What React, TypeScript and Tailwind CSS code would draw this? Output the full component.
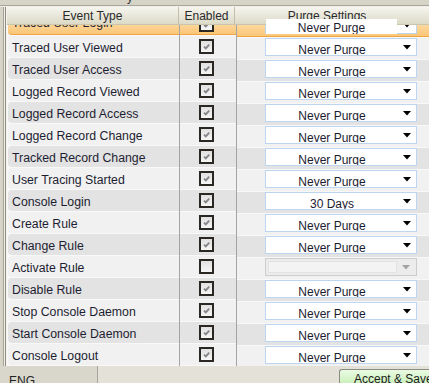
import React from "react";

type Row = {
  label: string;
  checked: boolean;
  value: string;
  disabled?: boolean;
  selected?: boolean;
};

const rows: Row[] = [
  { label: "Traced User Login", checked: true, value: "Never Purge", selected: true },
  { label: "Traced User Viewed", checked: true, value: "Never Purge" },
  { label: "Traced User Access", checked: true, value: "Never Purge" },
  { label: "Logged Record Viewed", checked: true, value: "Never Purge" },
  { label: "Logged Record Access", checked: true, value: "Never Purge" },
  { label: "Logged Record Change", checked: true, value: "Never Purge" },
  { label: "Tracked Record Change", checked: true, value: "Never Purge" },
  { label: "User Tracing Started", checked: true, value: "Never Purge" },
  { label: "Console Login", checked: true, value: "30 Days" },
  { label: "Create Rule", checked: true, value: "Never Purge" },
  { label: "Change Rule", checked: true, value: "Never Purge" },
  { label: "Activate Rule", checked: false, value: "", disabled: true },
  { label: "Disable Rule", checked: true, value: "Never Purge" },
  { label: "Stop Console Daemon", checked: true, value: "Never Purge" },
  { label: "Start Console Daemon", checked: true, value: "Never Purge" },
  { label: "Console Logout", checked: true, value: "Never Purge" },
];

const Arrow = ({ color }: { color: string }) => (
  <svg width="8" height="5" viewBox="0 0 8 5">
    <path d="M0 0 L8 0 L4 4.5 Z" fill={color} />
  </svg>
);

const CheckBox = ({ checked }: { checked: boolean }) => (
  <div className="w-[15px] h-[15px] border-2 border-[#2b2824] bg-linear-to-b from-[#e0e0e0] to-[#f6f6f6] flex items-center justify-center">
    {checked && (
      <svg width="11" height="11" viewBox="0 0 11 11">
        <path d="M3 5.6 L4.8 7.4 L8.2 3.6" stroke="#858585" strokeWidth="1.8" fill="none" />
      </svg>
    )}
  </div>
);

const Dropdown = ({ value, disabled }: { value: string; disabled?: boolean }) => {
  if (disabled) {
    return (
      <div className="ml-[28px] mt-[2px] w-[152px] h-[18px] border border-[#cdcdcd] bg-[#ececec] flex p-[2px]">
        <div className="flex-1 bg-[#f3f3f3] border border-[#e2e2e2]" />
        <div className="w-[17px] flex items-center justify-center">
          <Arrow color="#a3a3a3" />
        </div>
      </div>
    );
  }
  return (
    <div className="ml-[28px] mt-[2px] w-[152px] h-[18px] border border-[#bcd6f2] bg-white flex overflow-hidden">
      <div className="flex-1 text-center text-[12px] leading-none pt-[5px] text-[#1c1c30]">{value}</div>
      <div className="w-[18px] flex items-center justify-center">
        <Arrow color="#000000" />
      </div>
    </div>
  );
};

export default function App() {
  return (
    <div className="relative w-[429px] h-[383px] overflow-hidden bg-[#d6d3c7] font-['Liberation_Sans',Arial,sans-serif] text-[#1e1e32]">
      {/* top strip */}
      <div className="h-[7px] flex flex-col">
        <div className="h-[5px] overflow-hidden">
          <div className="pl-[127px] -mt-[9px] text-[12px] leading-none text-[#333]">y</div>
        </div>
        <div className="h-px bg-[#a9a69a]" />
        <div className="h-px bg-[#efeee8]" />
      </div>

      <div className="flex h-[359px]">
        {/* left gutter */}
        <div className="flex w-[7px]">
          <div className="w-[3px]" />
          <div className="w-px bg-[#a6a397]" />
          <div className="w-px bg-[#efeee8]" />
          <div className="w-px bg-[#8f8c82]" />
          <div className="w-px bg-[#f4f3ee]" />
        </div>

        <div className="flex-1 flex flex-col bg-[#f8f8f8]">
          {/* header */}
          <div className="h-[18px] flex bg-linear-to-b from-[#f6f5ef] to-[#dcdac7] border-b border-[#c9c5ae] text-[12px] leading-none text-[#2a2a2a]">
            <div className="w-[172px] border-r border-[#c2bfac] text-center pt-[3px]">Event Type</div>
            <div className="w-[56px] border-r border-[#c2bfac] text-center pt-[3px]">Enabled</div>
            <div className="flex-1 text-center pt-[3px] pr-[10px]">Purge Settings</div>
          </div>

          {/* rows */}
          <div className="flex-1 overflow-hidden">
            <div className="-mt-[11px]">
              {rows.map((r, i) => {
                const bg = r.selected
                  ? "bg-linear-to-b from-[#fde6bd] to-[#fbc676] border-b border-[#eea442]"
                  : i % 2 === 0
                  ? "bg-[#e3e3e3]"
                  : "bg-[#f1f1f1]";
                return (
                  <div key={r.label} className="flex h-[22px]">
                    <div className="w-[173px] border-r border-[#a4a4a4] pb-px pl-px">
                      <div className={`h-[21px] rounded-l-[4px] pl-[4px] text-[12.3px] leading-none ${bg} ${r.selected ? "pt-[3px]" : "pt-[6px]"}`}>
                        {r.label}
                      </div>
                    </div>
                    <div className="w-[57px] border-r border-[#a4a4a4] pb-px">
                      <div className={`h-[21px] flex items-center pl-[19px] ${bg}`}>
                        <CheckBox checked={r.checked} />
                      </div>
                    </div>
                    <div className="flex-1 pb-px">
                      <div className={`h-[21px] ${bg}`}>
                        <Dropdown value={r.value} disabled={r.disabled} />
                      </div>
                    </div>
                  </div>
                );
              })}
            </div>
          </div>
        </div>
      </div>

      {/* status bar */}
      <div className="h-[17px] flex flex-col">
        <div className="h-px bg-[#a8a59a]" />
        <div className="h-px bg-[#f2f1ea]" />
        <div className="flex-1 flex bg-[#e4e2d8]">
          <div className="w-[98px] bg-[#d9d7cb] border-r border-[#a8a59a] text-[12px] leading-none pl-[9px] pt-[9px] text-[#222]">ENG</div>
          <div className="flex-1" />
          <div className="w-[90px] shrink-0 mt-[3px] rounded-tl-[3px] border-l border-t border-[#8d8c84] bg-linear-to-b from-[#eafbe2] to-[#c3ecb2] text-[12px] leading-none pl-[14px] pt-[3px] text-[#1c1c1c] whitespace-nowrap overflow-hidden">
            Accept &amp; Save
          </div>
        </div>
      </div>

      {/* first row's dropdown drawn over the header */}
      <div className="absolute left-[266px] top-[19px] w-[131px] h-[15px] bg-white overflow-hidden text-center text-[12px] leading-none pt-[3px] text-[#1c1c30]">
        Never Purge
      </div>
    </div>
  );
}
